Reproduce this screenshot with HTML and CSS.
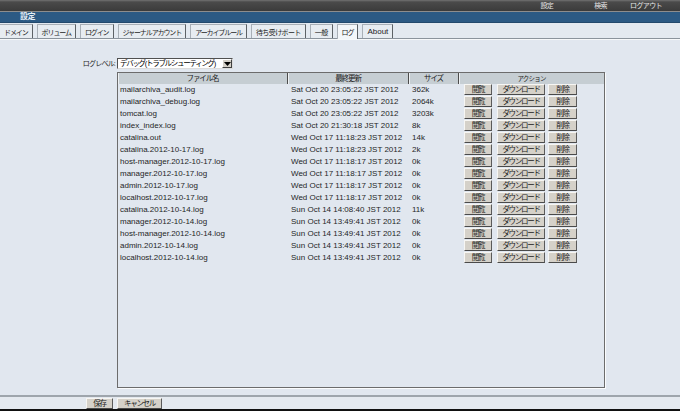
FILE: index.html
```html
<!DOCTYPE html>
<html lang="ja">
<head>
<meta charset="utf-8">
<title>設定</title>
<link rel="stylesheet" href="styles.css">
</head>
<body>
<header class="topbar">
  <nav class="topnav">
    <span class="tn tn-settings">設定</span>
    <span class="tn tn-search">検索</span>
    <span class="tn tn-logout">ログアウト</span>
  </nav>
</header>
<div class="titlebar"><span class="title">設定</span></div>
<div class="tabs">
  <span class="tab">ドメイン</span>
  <span class="tab">ボリューム</span>
  <span class="tab">ログイン</span>
  <span class="tab">ジャーナルアカウント</span>
  <span class="tab">アーカイブルール</span>
  <span class="tab tab-kanji">待ち受けポート</span>
  <span class="tab tab-kanji">一般</span>
  <span class="tab tab-active">ログ</span>
  <span class="tab tab-latin">About</span>
</div>
<main class="content">
  <div class="form">
    <label class="lbl">ログレベル:</label>
    <div class="select">
      <span class="select-text">デバッグ(トラブルシューティング)</span>
      <span class="select-btn"><svg width="7" height="4" viewBox="0 0 7 4"><path d="M0 0h7L3.5 4z" fill="#000"/></svg></span>
    </div>
    <div class="spacer"></div>
    <div class="panel">
      <table class="logs">
        <colgroup><col class="c1"><col class="c2"><col class="c3"><col class="c4"></colgroup>
        <thead>
          <tr><th>ファイル名</th><th>最終更新</th><th>サイズ</th><th class="th-act">アクション</th></tr>
        </thead>
        <tbody>
          <tr><td>mailarchiva_audit.log</td><td>Sat Oct 20 23:05:22 JST 2012</td><td>362k</td><td><div class="acts"><span class="btn b-view">閲覧</span><span class="btn b-dl">ダウンロード</span><span class="btn b-del">削除</span></div></td></tr>
          <tr><td>mailarchiva_debug.log</td><td>Sat Oct 20 23:05:22 JST 2012</td><td>2064k</td><td><div class="acts"><span class="btn b-view">閲覧</span><span class="btn b-dl">ダウンロード</span><span class="btn b-del">削除</span></div></td></tr>
          <tr><td>tomcat.log</td><td>Sat Oct 20 23:05:22 JST 2012</td><td>3203k</td><td><div class="acts"><span class="btn b-view">閲覧</span><span class="btn b-dl">ダウンロード</span><span class="btn b-del">削除</span></div></td></tr>
          <tr><td>index_index.log</td><td>Sat Oct 20 21:30:18 JST 2012</td><td>8k</td><td><div class="acts"><span class="btn b-view">閲覧</span><span class="btn b-dl">ダウンロード</span><span class="btn b-del">削除</span></div></td></tr>
          <tr><td>catalina.out</td><td>Wed Oct 17 11:18:23 JST 2012</td><td>14k</td><td><div class="acts"><span class="btn b-view">閲覧</span><span class="btn b-dl">ダウンロード</span><span class="btn b-del">削除</span></div></td></tr>
          <tr><td>catalina.2012-10-17.log</td><td>Wed Oct 17 11:18:23 JST 2012</td><td>2k</td><td><div class="acts"><span class="btn b-view">閲覧</span><span class="btn b-dl">ダウンロード</span><span class="btn b-del">削除</span></div></td></tr>
          <tr><td>host-manager.2012-10-17.log</td><td>Wed Oct 17 11:18:17 JST 2012</td><td>0k</td><td><div class="acts"><span class="btn b-view">閲覧</span><span class="btn b-dl">ダウンロード</span><span class="btn b-del">削除</span></div></td></tr>
          <tr><td>manager.2012-10-17.log</td><td>Wed Oct 17 11:18:17 JST 2012</td><td>0k</td><td><div class="acts"><span class="btn b-view">閲覧</span><span class="btn b-dl">ダウンロード</span><span class="btn b-del">削除</span></div></td></tr>
          <tr><td>admin.2012-10-17.log</td><td>Wed Oct 17 11:18:17 JST 2012</td><td>0k</td><td><div class="acts"><span class="btn b-view">閲覧</span><span class="btn b-dl">ダウンロード</span><span class="btn b-del">削除</span></div></td></tr>
          <tr><td>localhost.2012-10-17.log</td><td>Wed Oct 17 11:18:17 JST 2012</td><td>0k</td><td><div class="acts"><span class="btn b-view">閲覧</span><span class="btn b-dl">ダウンロード</span><span class="btn b-del">削除</span></div></td></tr>
          <tr><td>catalina.2012-10-14.log</td><td>Sun Oct 14 14:08:40 JST 2012</td><td>11k</td><td><div class="acts"><span class="btn b-view">閲覧</span><span class="btn b-dl">ダウンロード</span><span class="btn b-del">削除</span></div></td></tr>
          <tr><td>manager.2012-10-14.log</td><td>Sun Oct 14 13:49:41 JST 2012</td><td>0k</td><td><div class="acts"><span class="btn b-view">閲覧</span><span class="btn b-dl">ダウンロード</span><span class="btn b-del">削除</span></div></td></tr>
          <tr><td>host-manager.2012-10-14.log</td><td>Sun Oct 14 13:49:41 JST 2012</td><td>0k</td><td><div class="acts"><span class="btn b-view">閲覧</span><span class="btn b-dl">ダウンロード</span><span class="btn b-del">削除</span></div></td></tr>
          <tr><td>admin.2012-10-14.log</td><td>Sun Oct 14 13:49:41 JST 2012</td><td>0k</td><td><div class="acts"><span class="btn b-view">閲覧</span><span class="btn b-dl">ダウンロード</span><span class="btn b-del">削除</span></div></td></tr>
          <tr><td>localhost.2012-10-14.log</td><td>Sun Oct 14 13:49:41 JST 2012</td><td>0k</td><td><div class="acts"><span class="btn b-view">閲覧</span><span class="btn b-dl">ダウンロード</span><span class="btn b-del">削除</span></div></td></tr>
        </tbody>
      </table>
    </div>
  </div>
</main>
<footer class="footer">
  <span class="btn fb-save">保存</span>
  <span class="btn fb-cancel">キャンセル</span>
</footer>
</body>
</html>
```
FILE: styles.css
```css
* { box-sizing: border-box; }
html, body { margin: 0; padding: 0; }
body {
  width: 680px;
  height: 411px;
  overflow: hidden;
  display: flex;
  flex-direction: column;
  background: #e1e7ef;
  font-family: "Liberation Sans", "Noto Sans CJK JP", sans-serif;
  font-size: 8px;
  color: #222;
}

/* top bar */
.topbar {
  height: 12px;
  flex: none;
  background: linear-gradient(#727272 0, #4a4a4a 2px, #3b3b3b 100%);
  border-bottom: 1px solid #8d8d8d;
}
.topnav {
  display: flex;
  justify-content: flex-end;
  padding-right: 18px;
  height: 11px;
  align-items: center;
}
.tn {
  font-size: 7px;
  letter-spacing: -0.6px;
  color: #e6e6e6;
  line-height: 11px;
}
.tn-search { margin-left: 41px; }
.tn-logout { margin-left: 23px; }

/* blue title bar */
.titlebar {
  height: 11px;
  flex: none;
  background: #2c5a84;
  border-bottom: 1px solid #23496c;
}
.title {
  display: block;
  padding-left: 20px;
  font-size: 8px;
  font-weight: bold;
  color: #e4edf6;
  line-height: 10px;
  letter-spacing: -0.5px;
}

/* tabs */
.tabs {
  flex: none;
  height: 16px;
  display: flex;
  align-items: stretch;
  gap: 4px;
  padding-top: 1px;
  background: #e3e9f0;
  border-bottom: 1px solid #8a939c;
  box-shadow: 0 1px 0 #f6f8fa;
}
.tab {
  display: flex;
  align-items: center;
  padding: 0 4px;
  font-size: 7px;
  letter-spacing: -1.1px;
  color: #1e1e1e;
  background: #e7ecf1;
  border: 1px solid #a9b0b7;
  border-right-color: #5d6266;
  border-bottom: 0;
}
.tab:first-child { border-left: 0; padding-left: 4px; }
.tab-kanji { letter-spacing: -0.6px; }
.tab-latin { font-size: 8px; letter-spacing: 0; padding: 0 4px; }
.tab-active {
  background: #f3f6f9;
  margin-bottom: -1px;
}

/* content */
.content {
  flex: 1;
  padding-top: 19px;
}
.form {
  display: grid;
  grid-template-columns: 117px 488px;
  row-gap: 3px;
}
.lbl {
  text-align: right;
  padding-right: 2px;
  font-size: 7px;
  letter-spacing: -0.8px;
  line-height: 11px;
  color: #1e1e1e;
}
.select {
  width: 116px;
  height: 11px;
  display: flex;
  align-items: stretch;
  background: #fff;
  border: 1px solid;
  border-color: #505050 #dcdcdc #dcdcdc #505050;
}
.select-text {
  flex: 1;
  padding-left: 2px;
  font-size: 7.5px;
  letter-spacing: -1.3px;
  line-height: 9px;
  color: #000;
  white-space: nowrap;
  overflow: hidden;
}
.select-btn {
  width: 10px;
  display: flex;
  align-items: center;
  justify-content: center;
  background: #d4d0c8;
  border: 1px solid;
  border-color: #fff #404040 #404040 #fff;
}

/* table panel */
.panel {
  height: 316px;
  border: 1px solid #6c6c6c;
  box-shadow: 1px 1px 0 #fbfcfd;
}
.logs {
  width: 100%;
  table-layout: fixed;
  border-collapse: separate;
  border-spacing: 0;
}
.c1 { width: 170px; }
.c2 { width: 121px; }
.c3 { width: 50px; }
.logs th {
  height: 11px;
  padding: 0;
  background: #c6ced3;
  font-weight: normal;
  font-size: 7.5px;
  letter-spacing: -1.1px;
  line-height: 10px;
  color: #1a1a1a;
  text-align: center;
  border-right: 1px solid #4c4c4c;
  box-shadow: inset 1px 0 0 #eef1f3;
}
.logs th.th-act {
  border-right: 0;
  font-size: 6.5px;
  letter-spacing: -0.8px;
}
.logs td {
  height: 12px;
  padding: 0 2px;
  white-space: nowrap;
  overflow: hidden;
  line-height: 12px;
  vertical-align: top;
  color: #1f1f1f;
}
.logs td:first-child { padding-left: 2px; }
.logs td:nth-child(2) { padding-left: 3px; }
.logs td:nth-child(3) { padding-left: 3px; }
.logs td:last-child { padding-left: 5px; }

.acts {
  display: flex;
  align-items: flex-start;
}
.btn {
  display: flex;
  align-items: center;
  justify-content: center;
  height: 11px;
  background: #d5d1c9;
  border: 1px solid;
  border-color: #f7f6f3 #5a5a5a #4a4a4a #f7f6f3;
  font-size: 7.5px;
  letter-spacing: -1.3px;
  line-height: 9px;
  color: #222;
  white-space: nowrap;
}
.b-view { width: 28px; margin-right: 5px; }
.b-dl { width: 48px; margin-right: 3px; }
.b-del { width: 29px; }

/* footer */
.footer {
  flex: none;
  height: 16px;
  display: flex;
  align-items: flex-start;
  gap: 4px;
  padding: 1px 0 0 86px;
  background: #e4e9ef;
  border-top: 2px solid #9ea5ac;
  border-bottom: 2px solid #111;
}
.fb-save { width: 27px; }
.fb-cancel { width: 45px; }
```
